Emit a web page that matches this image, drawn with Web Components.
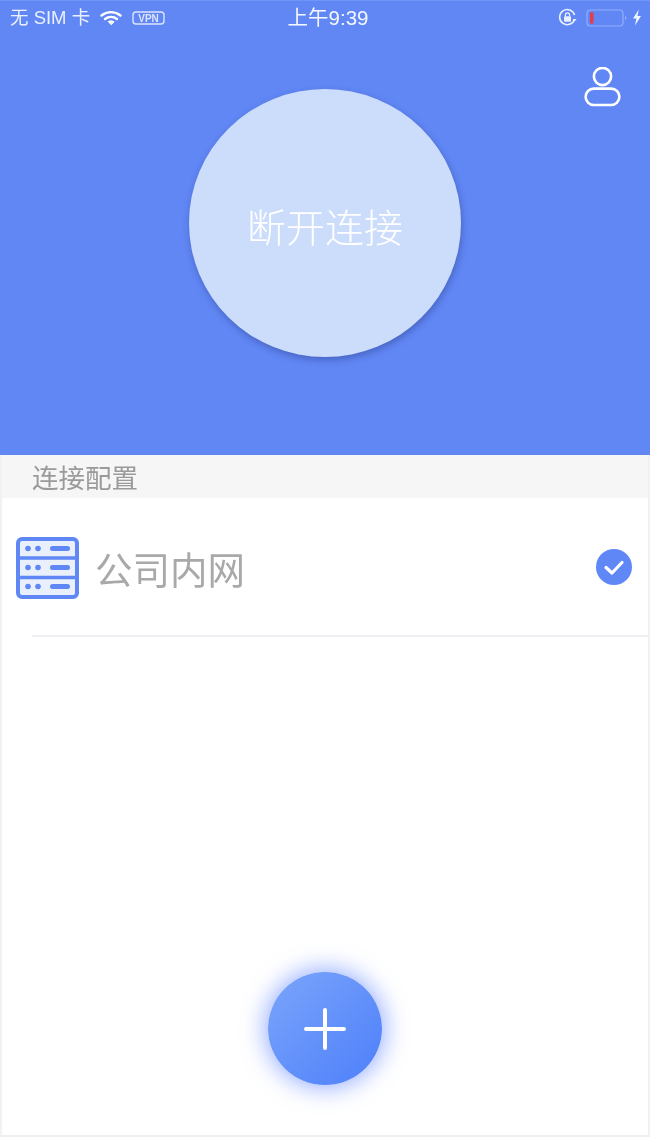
<!DOCTYPE html>
<html lang="zh">
<head>
<meta charset="utf-8">
<title>VPN</title>
<style>
    html, body { margin: 0; padding: 0; height: 100%; background: #fff; }
    body { font-family: "Liberation Sans", "Noto Sans CJK SC", sans-serif; }
</style>
</head>
<body>
<app-shell>
    <hero-panel slot="hero">断开连接</hero-panel>
    <section-label slot="list">连接配置</section-label>
    <config-row slot="list">公司内网</config-row>
    <add-button slot="fab"></add-button>
</app-shell>

<script>
class AppShell extends HTMLElement {
    constructor() {
        super();
        this.attachShadow({ mode: 'open' });
        this.shadowRoot.innerHTML = `
        <style>
            :host {
                display: flex;
                flex-direction: column;
                width: 650px;
                height: 1137px;
                overflow: hidden;
                background: #fff;
                filter: blur(.45px); /* the reference is a soft upscale */
            }
            .body {
                flex: 1;
                display: flex;
                flex-direction: column;
                border-left: 2px solid #f1f2f4;
                border-right: 2px solid #f1f2f4;
                border-bottom: 2px solid #eeeff1;
            }
            .list { flex: 1; display: flex; flex-direction: column; }
            .foot { display: flex; justify-content: center; height: 163px; flex: none; }
        </style>
        <slot name="hero"></slot>
        <div class="body">
            <div class="list"><slot name="list"></slot></div>
            <div class="foot"><slot name="fab"></slot></div>
        </div>
        `;
    }
}

class StatusBar extends HTMLElement {
    constructor() {
        super();
        this.attachShadow({ mode: 'open' });
        this.shadowRoot.innerHTML = `
        <style>
            :host {
                display: grid;
                grid-template-columns: 1fr auto 1fr;
                align-items: center;
                height: 33px;
                padding: 0 8px 0 10px;
                color: #eaf0ff;
                font-size: 18.5px;
                line-height: 33px;
            }
            .left, .right { display: flex; align-items: center; }
            .left { gap: 10px; }
            .right { justify-content: flex-end; }
            .time { font-size: 20.5px; color: #f4f7ff; margin-left: 4px; }
            svg { display: block; }
        </style>
        <div class="left">
            <span>无 SIM 卡</span>
            <svg width="22" height="16" viewBox="0 0 22 16" fill="none" stroke="#fff" stroke-linecap="round">
                <path d="M1.5 5.5C7 1 15 1 20.5 5.5" stroke-width="2.4"/>
                <path d="M5 9C8.5 6.4 13.5 6.4 17 9" stroke-width="2.4"/>
                <path d="M11 14.5L8.2 11.6C9.8 10.6 12.2 10.6 13.8 11.6Z" fill="#fff" stroke-width="1"/>
            </svg>
            <svg width="33" height="16" viewBox="0 0 33 16">
                <rect x="1" y="2" width="31" height="12" rx="3" fill="none" stroke="#dbe5ff" stroke-width="1.4"/>
                <text x="16.5" y="12" text-anchor="middle" font-family="Liberation Sans" font-weight="700" font-size="10" fill="#dbe5ff">VPN</text>
            </svg>
        </div>
        <div class="time">上午9:39</div>
        <div class="right">
            <svg width="19" height="19" viewBox="0 0 19 19" fill="none" style="margin-right:9px">
                <path d="M16.5 11.5A7.6 7.6 0 1 1 16.6 7" stroke="#eaf0ff" stroke-width="1.6"/>
                <path d="M14.6 11h4l-2 2.6z" fill="#eaf0ff"/>
                <rect x="6" y="8.2" width="7" height="5.6" rx="1" fill="#eaf0ff"/>
                <path d="M7.4 8.4V7a2.1 2.1 0 0 1 4.2 0v1.4" stroke="#eaf0ff" stroke-width="1.2"/>
            </svg>
            <svg width="41" height="18" viewBox="0 0 41 18" style="margin-right:5px">
                <rect x="1" y="1" width="36" height="16" rx="3.5" fill="none" stroke="#93aefa" stroke-width="1.2"/>
                <rect x="4" y="3.5" width="3.5" height="11" fill="#ea3a46"/>
                <path d="M39 7c1 .3 1.400 1 1.400 2s-.4 1.700-1.400 2z" fill="#93aefa"/>
            </svg>
            <svg width="10" height="17" viewBox="0 0 10 17">
                <path d="M6.8 0.5L1 9.6h3.4L3 16.5 9 7H5.4z" fill="#f2f5ff"/>
            </svg>
        </div>
        `;
    }
}

class HeroPanel extends HTMLElement {
    constructor() {
        super();
        this.attachShadow({ mode: 'open' });
        this.shadowRoot.innerHTML = `
        <style>
            :host {
                display: block;
                flex: none;
                height: 455px;
                background: #6187f5;
                box-sizing: border-box;
                border-top: 1px solid #7094f7;
            }
            .stage {
                display: flex;
                flex-direction: column;
                align-items: center;
                padding-top: 55px;
                position: relative;
            }
            .disc {
                display: flex;
                align-items: center;
                justify-content: center;
                width: 272px;
                height: 268px;
                border-radius: 50%;
                background: #ccdcfb;
                box-shadow: 1px 3px 7px rgba(40, 60, 130, .45);
                color: #fff;
                font-size: 39px;
                font-weight: 300;
                padding-top: 4px;
                box-sizing: border-box;
            }
            .user { position: absolute; top: 33px; right: 29px; }
            svg { display: block; }
        </style>
        <status-bar></status-bar>
        <div class="stage">
            <div class="disc"><slot></slot></div>
            <svg class="user" width="37" height="40" viewBox="0 0 37 40" fill="none" stroke="#fff" stroke-width="2.6">
                <circle cx="18.5" cy="9.5" r="8.6"/>
                <rect x="1.6" y="21.6" width="33.8" height="16.4" rx="8.2"/>
            </svg>
        </div>
        `;
    }
}

class SectionLabel extends HTMLElement {
    constructor() {
        super();
        this.attachShadow({ mode: 'open' });
        this.shadowRoot.innerHTML = `
        <style>
            :host {
                display: flex;
                align-items: center;
                height: 43px;
                padding-left: 30px;
                background: #f6f6f6;
                color: #9a9a9a;
                font-size: 26.5px;
                flex: none;
            }
        </style>
        <slot></slot>
        `;
    }
}

class ConfigRow extends HTMLElement {
    constructor() {
        super();
        this.attachShadow({ mode: 'open' });
        this.shadowRoot.innerHTML = `
        <style>
            :host {
                display: block;
                flex: none;
                padding-left: 30px;
            }
            .row {
                display: flex;
                align-items: center;
                height: 137px;
                border-bottom: 2px solid #eff0f3;
                color: #a9a9a9;
                font-size: 37.5px;
                font-weight: 400;
            }
            .server { margin-left: -16px; margin-right: 16px; margin-top: 2px; flex: none; }
            .label { flex: 1; margin-top: 1px; }
            .check { margin-right: 16px; margin-top: 1px; flex: none; }
            svg { display: block; }
        </style>
        <div class="row">
            <svg class="server" width="63" height="62" viewBox="0 0 63 62">
                <rect x="2" y="2" width="59" height="58" rx="4" fill="#e9effb" stroke="#5f87f6" stroke-width="4"/>
                <path d="M2 21h59M2 40.500h59" stroke="#5f87f6" stroke-width="3.600"/>
                <g fill="#5f87f6">
                    <circle cx="12" cy="11.500" r="2.800"/><circle cx="22" cy="11.500" r="2.800"/>
                    <rect x="34" y="9" width="20" height="5" rx="2.500"/>
                    <circle cx="12" cy="30.500" r="2.800"/><circle cx="22" cy="30.500" r="2.800"/>
                    <rect x="34" y="28" width="20" height="5" rx="2.500"/>
                    <circle cx="12" cy="49.500" r="2.800"/><circle cx="22" cy="49.500" r="2.800"/>
                    <rect x="34" y="47" width="20" height="5" rx="2.500"/>
                </g>
            </svg>
            <span class="label"><slot></slot></span>
            <svg class="check" width="36" height="36" viewBox="0 0 36 36">
                <circle cx="18" cy="18" r="18" fill="#5f87f6"/>
                <path d="M10 18.500l6 5.500 10-10.500" fill="none" stroke="#fff" stroke-width="3.200" stroke-linecap="round" stroke-linejoin="round"/>
            </svg>
        </div>
        `;
    }
}

class AddButton extends HTMLElement {
    constructor() {
        super();
        this.attachShadow({ mode: 'open' });
        this.shadowRoot.innerHTML = `
        <style>
            :host {
                display: flex;
                align-items: center;
                justify-content: center;
                width: 114px;
                height: 113px;
                border-radius: 50%;
                background: linear-gradient(135deg, #7ba5fb 0%, #4d7ffa 100%);
                box-shadow: 0 0 22px 4px rgba(80, 120, 255, .55);
            }
            svg { display: block; }
        </style>
        <svg width="42" height="42" viewBox="0 0 42 42" stroke="#fff" stroke-width="4" stroke-linecap="round">
            <path d="M21 2v38M2 21h38"/>
        </svg>
        `;
    }
}

customElements.define('app-shell', AppShell);
customElements.define('status-bar', StatusBar);
customElements.define('hero-panel', HeroPanel);
customElements.define('section-label', SectionLabel);
customElements.define('config-row', ConfigRow);
customElements.define('add-button', AddButton);
</script>
</body>
</html>
